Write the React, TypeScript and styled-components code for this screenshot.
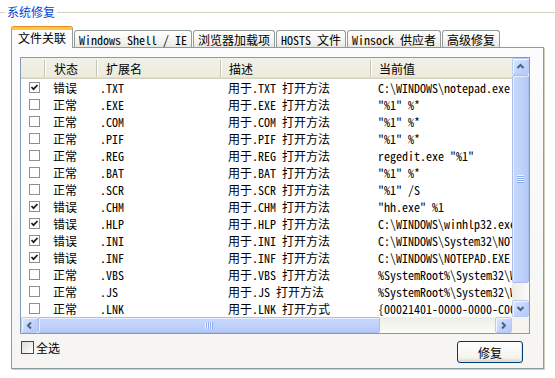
import styled, { createGlobalStyle, css } from "styled-components";

const GlobalStyle = createGlobalStyle`
  html, body {
    margin: 0;
    padding: 0;
    background: #fff;
  }
  body {
    font-family: "Noto Sans Mono CJK SC", "Noto Sans CJK SC", "Liberation Mono", monospace;
    font-size: 12px;
    color: #000;
  }
`;

const Page = styled.div`
  width: 555px;
  height: 378px;
  overflow: hidden;
  background: #fff;
`;

const Caption = styled.div`
  display: flex;
  align-items: center;
  gap: 2px;
  height: 24px;
  &::before {
    content: "";
    width: 5px;
    border-top: 1px solid #d0d0bf;
  }
  &::after {
    content: "";
    flex: 1;
    border-top: 1px solid #d0d0bf;
  }
`;
const CaptionText = styled.span`
  color: #0046d5;
  line-height: 14px;
`;

const TabControl = styled.div`
  margin: 3px 0 0 11px;
  width: 533px;
`;
const TabStrip = styled.div`
  display: flex;
  align-items: flex-end;
  gap: 1px;
  height: 20px;
  position: relative;
  z-index: 1;
`;
const Tab = styled.div<{ $active?: boolean }>`
  box-sizing: border-box;
  display: flex;
  align-items: center;
  justify-content: center;
  height: 17px;
  padding: 1px 4px 0;
  border: 1px solid #919b9c;
  border-bottom: none;
  border-radius: 3px 3px 0 0;
  background: linear-gradient(#ffffff, #f3f2ec 70%, #e9e8e0);
  white-space: nowrap;
  line-height: 14px;
  ${(p) =>
    p.$active &&
    css`
      height: 21px;
      margin-bottom: -1px;
      padding: 0 6px 2px;
      border-top: 3px solid #ffc73c;
      box-shadow: 0 -1px 0 #e68b2c;
      background: #fcfcfe;
    `}
`;

const Panel = styled.div`
  box-sizing: border-box;
  height: 322px;
  display: flex;
  flex-direction: column;
  padding: 9px 13px 5px 8px;
  border: 1px solid #919b9c;
  background: linear-gradient(#fcfcfe, #f6f5f1);
  box-shadow: 1px 1px 0 #d0cebf;
`;

const ListView = styled.div`
  display: grid;
  grid-template-columns: 491px 17px;
  grid-template-rows: 259px 16px;
  border: 1px solid #7f9db9;
  background: #fff;
`;
const ListContent = styled.div`
  overflow: hidden;
`;

const COLS = "24px 52px 124px 150px 200px";

const HeaderRow = styled.div`
  display: grid;
  grid-template-columns: ${COLS};
  height: 21px;
  background: linear-gradient(#f2f1e9, #ebeadb);
  box-shadow: inset 0 -1px 0 #d6d2c2, inset 0 -2px 0 #e2decd;
`;
const HeaderCell = styled.div<{ $pad: number }>`
  display: flex;
  align-items: center;
  margin: 2px 0 4px;
  padding-left: ${(p) => p.$pad}px;
  border-right: 1px solid #c7c5b2;
  box-shadow: 1px 0 0 #fff;
  white-space: nowrap;
`;

const Row = styled.div`
  display: grid;
  grid-template-columns: ${COLS};
  height: 17px;
  align-items: center;
`;
const Cell = styled.div<{ $pad: number }>`
  padding-left: ${(p) => p.$pad}px;
  white-space: nowrap;
  overflow: hidden;
  line-height: 17px;
`;
const CheckCell = styled.div`
  display: flex;
  align-items: center;
  padding-left: 8px;
`;
const RowCheck = styled.span`
  box-sizing: border-box;
  width: 11px;
  height: 11px;
  border: 1px solid #8e8f8f;
  background: #fff;
  display: flex;
  align-items: center;
  justify-content: center;
`;

const Track = styled.div<{ $vertical?: boolean }>`
  display: flex;
  flex-direction: ${(p) => (p.$vertical ? "column" : "row")};
  background: ${(p) =>
    p.$vertical
      ? "linear-gradient(90deg, #eeede5, #fbfbf8)"
      : "linear-gradient(#eeede5, #fbfbf8)"};
`;
const Spacer = styled.div`
  flex: 1;
`;
const Corner = styled.div`
  background: #f4f3ee;
`;
const ScrollButton = styled.div<{ $vertical?: boolean }>`
  box-sizing: border-box;
  flex: none;
  width: 17px;
  height: ${(p) => (p.$vertical ? "17px" : "16px")};
  display: flex;
  align-items: center;
  justify-content: center;
  border: 1px solid #b9cbf5;
  border-radius: 2px;
  background: linear-gradient(135deg, #dde7fe, #bfd2fb 60%, #b3c8f6);
  box-shadow: inset 1px 1px 0 #f2f6ff;
`;
const Thumb = styled.div<{ $vertical?: boolean; $size: number }>`
  box-sizing: border-box;
  flex: 0 0 ${(p) => p.$size}px;
  display: flex;
  align-items: center;
  justify-content: center;
  border: 1px solid #a9bdee;
  border-radius: 2px;
  background: ${(p) =>
    p.$vertical
      ? "linear-gradient(90deg, #c9d8fc, #bed1fb 60%, #b4c9f6)"
      : "linear-gradient(#c9d8fc, #bed1fb 60%, #b4c9f6)"};
  box-shadow: inset 1px 1px 0 #e8efff;
`;
const Grip = styled.div<{ $vertical?: boolean }>`
  width: ${(p) => (p.$vertical ? "7px" : "8px")};
  height: ${(p) => (p.$vertical ? "8px" : "7px")};
  background: repeating-linear-gradient(
    ${(p) => (p.$vertical ? "180deg" : "90deg")},
    #eef4fe 0 1px,
    #8cacee 1px 2px
  );
`;

const Footer = styled.div`
  display: flex;
  justify-content: space-between;
  align-items: flex-start;
  margin-top: 7px;
  height: 22px;
  padding: 0 7px 0 1px;
`;
const SelectAll = styled.label`
  display: flex;
  align-items: center;
  gap: 2px;
  height: 13px;
  line-height: 13px;
`;
const XpCheck = styled.span`
  box-sizing: border-box;
  width: 13px;
  height: 13px;
  border: 1px solid #1c5180;
  background: linear-gradient(135deg, #dcdcd7, #ffffff);
`;
const Button = styled.button`
  box-sizing: border-box;
  width: 66px;
  height: 22px;
  padding: 0;
  font: inherit;
  color: #000;
  border: 1px solid #003c74;
  border-radius: 3px;
  background: linear-gradient(#ffffff, #f4f3ee 80%, #d6d0c5);
  box-shadow: inset -1px -1px 0 #e3e0d6;
`;

function Chevron({ dir }: { dir: "up" | "down" | "left" | "right" }) {
  const rot = { up: 0, right: 90, down: 180, left: 270 }[dir];
  return (
    <svg width="9" height="9" viewBox="0 0 9 9" style={{ transform: `rotate(${rot}deg)` }}>
      <polyline points="1.5,6 4.5,3 7.5,6" fill="none" stroke="#4d6185" strokeWidth="2" />
    </svg>
  );
}

function CheckMark() {
  return (
    <svg width="9" height="9" viewBox="0 0 9 9">
      <polyline points="1.5,4 3.5,6.2 7.5,2" fill="none" stroke="#1a1a1a" strokeWidth="1.7" />
    </svg>
  );
}

type Entry = { bad: boolean; ext: string; desc: string; value: string };

const entries: Entry[] = [
  { bad: true, ext: ".TXT", desc: "用于.TXT 打开方法", value: "C:\\WINDOWS\\notepad.exe" },
  { bad: false, ext: ".EXE", desc: "用于.EXE 打开方法", value: '"%1" %*' },
  { bad: false, ext: ".COM", desc: "用于.COM 打开方法", value: '"%1" %*' },
  { bad: false, ext: ".PIF", desc: "用于.PIF 打开方法", value: '"%1" %*' },
  { bad: false, ext: ".REG", desc: "用于.REG 打开方法", value: 'regedit.exe "%1"' },
  { bad: false, ext: ".BAT", desc: "用于.BAT 打开方法", value: '"%1" %*' },
  { bad: false, ext: ".SCR", desc: "用于.SCR 打开方法", value: '"%1" /S' },
  { bad: true, ext: ".CHM", desc: "用于.CHM 打开方法", value: '"hh.exe" %1' },
  { bad: true, ext: ".HLP", desc: "用于.HLP 打开方法", value: "C:\\WINDOWS\\winhlp32.exe" },
  { bad: true, ext: ".INI", desc: "用于.INI 打开方法", value: "C:\\WINDOWS\\System32\\NOTEPAD.EXE" },
  { bad: true, ext: ".INF", desc: "用于.INF 打开方法", value: "C:\\WINDOWS\\NOTEPAD.EXE" },
  { bad: false, ext: ".VBS", desc: "用于.VBS 打开方法", value: "%SystemRoot%\\System32\\WScript.exe" },
  { bad: false, ext: ".JS", desc: "用于.JS 打开方法", value: "%SystemRoot%\\System32\\WScript.exe" },
  { bad: false, ext: ".LNK", desc: "用于.LNK 打开方式", value: "{00021401-0000-0000-C000-000000000046}" },
];

const tabs = ["文件关联", "Windows Shell / IE", "浏览器加载项", "HOSTS 文件", "Winsock 供应者", "高级修复"];

export default function App() {
  return (
    <Page>
      <GlobalStyle />
      <Caption>
        <CaptionText>系统修复</CaptionText>
      </Caption>
      <TabControl>
        <TabStrip>
          {tabs.map((t, i) => (
            <Tab key={t} $active={i === 0}>
              {t}
            </Tab>
          ))}
        </TabStrip>
        <Panel>
          <ListView>
            <ListContent>
              <HeaderRow>
                <HeaderCell $pad={0} />
                <HeaderCell $pad={9}>状态</HeaderCell>
                <HeaderCell $pad={9}>扩展名</HeaderCell>
                <HeaderCell $pad={8}>描述</HeaderCell>
                <HeaderCell $pad={8}>当前值</HeaderCell>
              </HeaderRow>
              {entries.map((e) => (
                <Row key={e.ext}>
                  <CheckCell>
                    <RowCheck>{e.bad && <CheckMark />}</RowCheck>
                  </CheckCell>
                  <Cell $pad={8}>{e.bad ? "错误" : "正常"}</Cell>
                  <Cell $pad={3}>{e.ext}</Cell>
                  <Cell $pad={7}>{e.desc}</Cell>
                  <Cell $pad={7}>{e.value}</Cell>
                </Row>
              ))}
            </ListContent>
            <Track $vertical>
              <ScrollButton $vertical>
                <Chevron dir="up" />
              </ScrollButton>
              <Thumb $vertical $size={208}>
                <Grip $vertical />
              </Thumb>
              <Spacer />
              <ScrollButton $vertical>
                <Chevron dir="down" />
              </ScrollButton>
            </Track>
            <Track>
              <ScrollButton>
                <Chevron dir="left" />
              </ScrollButton>
              <Thumb $size={342}>
                <Grip />
              </Thumb>
              <Spacer />
              <ScrollButton>
                <Chevron dir="right" />
              </ScrollButton>
            </Track>
            <Corner />
          </ListView>
          <Footer>
            <SelectAll>
              <XpCheck />
              全选
            </SelectAll>
            <Button>修复</Button>
          </Footer>
        </Panel>
      </TabControl>
    </Page>
  );
}
